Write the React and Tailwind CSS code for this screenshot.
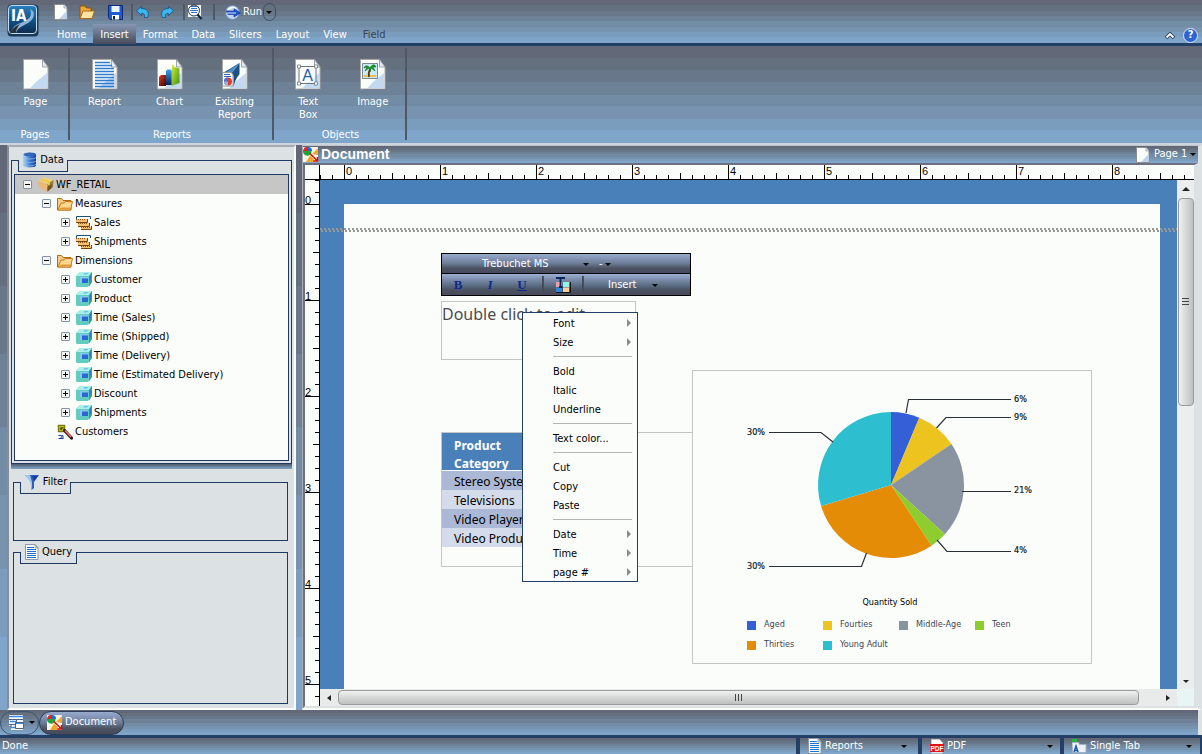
import React, { useState } from 'react';

// Banded gradients shared by the chrome
const BAND = 'bg-[linear-gradient(#626877_0_12%,#65707f_12%_25%,#68778a_25%_37%,#6e8297_37%_50%,#738ca6_50%_62%,#7793b0_62%_75%,#7a9dbd_75%_87%,#7fa5cb_87%)]';
const PILL = 'bg-[linear-gradient(#97abce,#8393b4_25%,#6a7c95_50%,#4c5262_75%,#454b59)]';

const tabs = ['Home', 'Insert', 'Format', 'Data', 'Slicers', 'Layout', 'View', 'Field'];

const tree = [
  { id: 'root', label: 'WF_RETAIL', icon: 'box', level: 0, open: true },
  { id: 'measures', label: 'Measures', icon: 'folder', level: 1, open: true },
  { id: 'sales', label: 'Sales', icon: 'measure', level: 2 },
  { id: 'shipments', label: 'Shipments', icon: 'measure', level: 2 },
  { id: 'dimensions', label: 'Dimensions', icon: 'folder', level: 1, open: true },
  { id: 'customer', label: 'Customer', icon: 'cube', level: 2 },
  { id: 'product', label: 'Product', icon: 'cube', level: 2 },
  { id: 'time-sales', label: 'Time (Sales)', icon: 'cube', level: 2 },
  { id: 'time-shipped', label: 'Time (Shipped)', icon: 'cube', level: 2 },
  { id: 'time-delivery', label: 'Time (Delivery)', icon: 'cube', level: 2 },
  { id: 'time-est', label: 'Time (Estimated Delivery)', icon: 'cube', level: 2 },
  { id: 'discount', label: 'Discount', icon: 'cube', level: 2 },
  { id: 'dim-shipments', label: 'Shipments', icon: 'cube', level: 2 },
  { id: 'customers', label: 'Customers', icon: 'filter', level: 1, leaf: true },
];

const indents = ['pl-2', 'pl-[27px]', 'pl-[46px]'];

const menuGroups = [
  [{ label: 'Font', sub: true }, { label: 'Size', sub: true }],
  [{ label: 'Bold' }, { label: 'Italic' }, { label: 'Underline' }],
  [{ label: 'Text color...' }],
  [{ label: 'Cut' }, { label: 'Copy' }, { label: 'Paste' }],
  [{ label: 'Date', sub: true }, { label: 'Time', sub: true }, { label: 'page #', sub: true }],
];

const slices = [
  { name: 'Aged', from: 0, to: 22.8, color: '#345fd6' },
  { name: 'Fourties', from: 22.8, to: 55.9, color: '#ecc31f' },
  { name: 'Middle-Age', from: 55.9, to: 132.4, color: '#8a94a1' },
  { name: 'Teen', from: 132.4, to: 146.2, color: '#8dce2e' },
  { name: 'Thirties', from: 146.2, to: 253.2, color: '#e58c06' },
  { name: 'Young Adult', from: 253.2, to: 360, color: '#2dbfcf' },
];

const leaders = [
  { text: '6%', x: 322, y: 32, d: 'M214 43L216.500 29.500H319' },
  { text: '9%', x: 322, y: 50, d: 'M244.500 58L254 47.500H319' },
  { text: '21%', x: 322, y: 123, d: 'M270 121.500H319' },
  { text: '4%', x: 322, y: 183, d: 'M245 170L255 181.500H319' },
  { text: '30%', x: 55, y: 199, d: 'M174.500 183L169.500 196.500H77' },
  { text: '30%', x: 55, y: 65, d: 'M141 72L129 62.500H77' },
];

const legend = [
  { name: 'Aged', square: 'bg-[#345fd6]' },
  { name: 'Fourties', square: 'bg-[#ecc31f]' },
  { name: 'Middle-Age', square: 'bg-[#8a94a1]' },
  { name: 'Teen', square: 'bg-[#8dce2e]' },
  { name: 'Thirties', square: 'bg-[#e58c06]' },
  { name: 'Young Adult', square: 'bg-[#2dbfcf]' },
];

const slicePath = (from, to) => {
  const point = (deg) => {
    const a = (deg * Math.PI) / 180;
    return `${199 + 73 * Math.sin(a)} ${115 - 73 * Math.cos(a)}`;
  };
  return `M199 115L${point(from)}A73 73 0 ${to - from > 180 ? 1 : 0} 1 ${point(to)}Z`;
};

/* ---------- icons ---------- */

const Sheet = ({ className, children }) => (
  <svg viewBox="0 0 26 31" className={className} aria-hidden="true">
    <path d="M3 3h17l5 6v22H3z" fill="#000" opacity=".25" />
    <path d="M.5.500h19L25 8v22H.5z" fill="#fbfdfb" stroke="#a9a6a6" />
    <path d="M24 14L13 23 7 29.500h17z" fill="#b5d0ee" opacity=".8" />
    <path d="M19.500.500V8H25z" fill="#e4ebf5" stroke="#8b8f98" strokeWidth=".8" />
    {children}
  </svg>
);

const BlueLines = () => (
  <path d="M3 3.500h15M3 6.500h17M3 9.500h19M3 12.500h19M3 15.500h19M3 18.500h19M3 21.500h19M3 24.500h19M3 27.500h19" stroke="#2e7bd0" strokeWidth="1.4" />
);

const PageIcon = () => <Sheet className="h-[31px] w-[26px]" />;

const ReportIcon = () => (
  <Sheet className="h-[31px] w-[26px]"><BlueLines /></Sheet>
);

const ChartIcon = () => (
  <Sheet className="h-[31px] w-[26px]">
    <defs>
      <linearGradient id="red" y2="1" x2="1"><stop stopColor="#e63b1c" /><stop offset="1" stopColor="#350505" /></linearGradient>
      <linearGradient id="blue" y2="1" x2="0"><stop stopColor="#35a5ee" /><stop offset="1" stopColor="#06225c" /></linearGradient>
      <linearGradient id="green" y2="1" x2="1"><stop stopColor="#d7ef3e" /><stop offset="1" stopColor="#3d9114" /></linearGradient>
    </defs>
    <path d="M2 18l2-2h5v11H2z" fill="url(#red)" />
    <path d="M9 12l1.500-1.500h3L15 12v14H9z" fill="url(#blue)" />
    <path d="M14.500 12l1-7 2 3 5 1.500V24l-8 3z" fill="url(#green)" />
  </Sheet>
);

const ExistingIcon = () => (
  <Sheet className="h-[31px] w-[26px]">
    <path d="M17.500 4L0 14.500h9l2.500 2.500v11c1.500-7 4-10 6-13z" fill="#1f4f80" />
    <path d="M17.500 4L3 14h7c3-3 5-6 7.500-10z" fill="#4f8fc4" />
    <path d="M.5 13.500H9l2 2V27H.5z" fill="#fff" stroke="#8b98a8" />
    <path d="M2 15.500h6M2 17.500h7" stroke="#2e6cc0" />
    <circle cx="6" cy="22.500" r="4" fill="#e53c28" />
    <path d="M6 22.500V18.500A4 4 0 002 22.500z" fill="#2d7be0" />
    <path d="M6 22.500H2A4 4 0 006 26.500z" fill="#8ab8ee" />
  </Sheet>
);

const TextBoxIcon = () => (
  <Sheet className="h-[31px] w-[26px]">
    <path d="M4 7.500h17v17H4z" fill="#fbfdfb" fillOpacity=".7" stroke="#6d7480" />
    <path d="M2.500 6h3v3h-3zM19.500 6h3v3h-3zM2.500 23h3v3h-3zM19.500 23h3v3h-3z" fill="#fff" stroke="#6d7480" strokeWidth=".8" />
    <text x="12.500" y="22" textAnchor="middle" fontSize="16" fill="#1c5fae" fontFamily="Liberation Sans, sans-serif">A</text>
  </Sheet>
);

const ImageIcon = () => (
  <Sheet className="h-[31px] w-[26px]">
    <path d="M2.500 4.500h15v15h-15z" fill="#c9eaf8" stroke="#7e8792" />
    <path d="M4 16h12v2H4z" fill="#e9bf58" />
    <path d="M10 10c-1 2-2 4-1 8" stroke="#5d3310" strokeWidth="1.800" fill="none" />
    <path d="M10 9C8 6 5 6 4 9l3-1-2 4 4-3 1 4 1-4 4 3-2-4 3 0c-1-3-4-3-6 1z" fill="#12a022" stroke="#0a5a16" strokeWidth=".5" />
  </Sheet>
);

const MiniPage = () => (
  <svg viewBox="0 0 14 16" className="h-4 w-3.5 shrink-0" aria-hidden="true">
    <path d="M.5.500h9.500l3 3.500v11.500H.5z" fill="#fbfdfb" stroke="#8f8d90" />
    <path d="M12.500 7L5 15h7.500z" fill="#bcd4ee" />
    <path d="M10 .500V4h3" fill="#e4ebf5" stroke="#8b8f98" strokeWidth=".7" />
  </svg>
);

const MiniReport = () => (
  <svg viewBox="0 0 14 16" className="h-4 w-3.5 shrink-0" aria-hidden="true">
    <path d="M.5.500h9.500l3 3v12H.5z" fill="#fbfdfb" stroke="#8f98a6" />
    <path d="M2 3.500h7M2 5.500h9M2 7.500h9M2 9.500h9M2 11.500h9M2 13.500h9" stroke="#1f6fd0" strokeWidth="1.200" />
    <path d="M10 .500V4h3z" fill="#cdd5e0" stroke="#8b8f98" strokeWidth=".7" />
  </svg>
);

const FolderIcon = () => (
  <svg viewBox="0 0 16 14" className="h-3.5 w-4" aria-hidden="true">
    <path d="M.5 13V1.500h4l1.500 2h8V13z" fill="#f6cf8c" stroke="#b36a12" />
    <path d="M1 13L4 6h3l1-1.500h7.500L13.500 13z" fill="#fcd78d" stroke="#c57a18" />
    <path d="M2 12.500l2-2h9.500l-.5 2z" fill="#e39a34" />
  </svg>
);

const MeasureIcon = () => (
  <svg viewBox="0 0 16 14" className="h-3.5 w-4" aria-hidden="true">
    <path d="M.5 3V.500h14V3" fill="none" stroke="#1c4f7c" />
    <path d="M0 3h11v3H0zM2 7h11v3H2zM5 11h10v2H5z" fill="#f4c076" />
    <path d="M0 6.500h11.500V3M2 10.500h11.500V7M5 13.500h10.500V10" fill="none" stroke="#7a430c" />
    <path d="M0 3.500h10M2 7.500h10M5 11.500h9" stroke="#8d5518" strokeDasharray="1 1" />
  </svg>
);

const CubeIcon = () => (
  <svg viewBox="0 0 16 15" className="h-[15px] w-4" aria-hidden="true">
    <path d="M0 4L4 0h12v10l-4 5H1l-1-1z" fill="#62cdbf" />
    <path d="M0 4L4 0h12l-3 4z" fill="#a9f0e8" />
    <path d="M13 4l3-4v10l-3 4.500z" fill="#3a9f8e" />
    <path d="M4 5h8v6H4z" fill="#2a68d0" />
    <path d="M4 5h8v1.500H6V11H4z" fill="#86c8f2" />
    <path d="M13.500 5L15 3v4.500L13.500 10z" fill="#2f78d8" />
    <path d="M7 2.500L8.500 1h4L11 2.500z" fill="#6fc0ee" />
  </svg>
);

const BoxIcon = () => (
  <svg viewBox="0 0 16 15" className="h-[15px] w-4" aria-hidden="true">
    <path d="M0 4L6.500.500 15 3l-5.500 4z" fill="#f0d27a" />
    <path d="M0 4l9.500 3v8L1 10z" fill="#ecb878" />
    <path d="M9.500 7L15.500 3l-.500 7-5.500 5z" fill="#94793a" />
    <path d="M4 2l8 2.500v3l-2 1v-3L2.500 3z" fill="#e8c93a" />
    <path d="M9.500 10l4-3v4l-4 3z" fill="#6b5626" />
  </svg>
);

const CustomersIcon = () => (
  <svg viewBox="0 0 16 16" className="h-4 w-4" aria-hidden="true">
    <path d="M1.500 1.500h6v6h-6z" fill="#d9d613" stroke="#7d7b0c" strokeWidth="1.500" />
    <path d="M4 6V4h2.500" fill="none" stroke="#111" strokeWidth="1.200" />
    <path d="M1.500 11.500h3M6 11l-3 4M1.500 14.500h5M4.500 11l2 2-2 2" stroke="#173f9c" fill="none" />
    <path d="M7.500 6.500l7 7.500" stroke="#2d1512" strokeWidth="3.200" strokeLinecap="round" />
    <path d="M8 6.500l6 6.500" stroke="#e0706a" strokeWidth="1.800" />
  </svg>
);

const DatabaseIcon = () => (
  <svg viewBox="0 0 15 16" className="h-4 w-[15px]" aria-hidden="true">
    <defs>
      <linearGradient id="db"><stop stopColor="#bcdcf8" /><stop offset=".5" stopColor="#3b83d8" /><stop offset="1" stopColor="#173a9a" /></linearGradient>
    </defs>
    <path d="M1 2.500C1-.2 14-.2 14 2.500v11c0 2.500-13 2.500-13 0z" fill="url(#db)" />
    <path d="M1 5.500c2 2 11 2 13 0M1 9c2 2 11 2 13 0M1 12.300c2 2 11 2 13 0" stroke="#8db9ea" strokeWidth=".8" fill="none" />
    <ellipse cx="7.500" cy="2.500" rx="6" ry="1.700" fill="#3166b8" />
  </svg>
);

const FunnelIcon = () => (
  <svg viewBox="0 0 16 16" className="h-4 w-4" aria-hidden="true">
    <path d="M1 1h14l-5 7v6l-2.500 2V8z" fill="#2a5fc0" />
    <path d="M1 1h5l2 7v7L6 8z" fill="#9cc8ee" />
    <path d="M8 2h6l-4 5z" fill="#1240a0" />
  </svg>
);

const DocIcon = () => (
  <svg viewBox="0 0 16 15" className="h-[15px] w-4 shrink-0" aria-hidden="true">
    <path d="M0 0h15v15H0z" fill="#fbf6e6" />
    <path d="M9 7l6-6v7zM3 15l4.500-7 5 7z" fill="#f0a52c" />
    <path d="M0 4h8.500A4 4 0 010 5z" fill="#1fa53c" />
    <path d="M4 4l1-4a4 4 0 014 4z" fill="#1c6be0" />
    <path d="M0 4a4.200 4.200 0 015-4v4z" fill="#e02818" />
    <path d="M7 6.500l7 7M14.500 10v4h-4" stroke="#c81616" strokeWidth="1.500" fill="none" />
  </svg>
);

const WindowsIcon = () => (
  <svg viewBox="0 0 16 16" className="h-4 w-4 shrink-0" aria-hidden="true">
    <path d="M0 0h14v15H2V11H0z" fill="#f4f7fb" />
    <path d="M0 1.500h14M1 6.500h6M2 12.500h5" stroke="#3d8ae0" strokeWidth="1.500" />
    <path d="M0 4.500h14M7.500 5v3M0 9.500h6M2 10v2" stroke="#54637a" />
    <path d="M6.500 7.500h8v6h-8z" fill="#fff" stroke="#54637a" />
    <path d="M7 8.500h7" stroke="#3d8ae0" />
  </svg>
);

const PdfIcon = () => (
  <svg viewBox="0 0 14 15" className="h-[15px] w-3.5 shrink-0" aria-hidden="true">
    <path d="M1.500.500h8l3 3V14h-11z" fill="#fff" stroke="#c8c8c8" />
    <path d="M0 5h14v8H0z" fill="#e01414" />
    <text x="7" y="11.500" textAnchor="middle" fontSize="6.500" fontWeight="bold" fill="#fff" fontFamily="Liberation Sans, sans-serif">PDF</text>
  </svg>
);

const TabIcon = () => (
  <svg viewBox="0 0 15 14" className="h-3.5 w-[15px] shrink-0" aria-hidden="true">
    <path d="M0 0h5v3H0z" fill="#2bb53e" />
    <path d="M0 3.500h6.500l1 2H14v8H.5z" fill="#eef2f8" stroke="#a4b1c4" />
    <path d="M2 13l2-6 2 6M2.500 11.500h3.500" stroke="#1c56b0" strokeWidth="1.500" fill="none" />
  </svg>
);

const LogoIcon = () => (
  <svg viewBox="0 0 32 33" className="h-[33px] w-8" aria-hidden="true">
    <defs>
      <linearGradient id="logo" x2="0" y2="1"><stop stopColor="#2a7fc0" /><stop offset=".5" stopColor="#10548c" /><stop offset="1" stopColor="#0d2c4a" /></linearGradient>
    </defs>
    <rect x=".5" y=".5" width="31" height="32" rx="4" fill="#1b3a58" />
    <rect x="1.500" y="1.500" width="28" height="28" rx="3.500" fill="url(#logo)" stroke="#c3dcf0" />
    <path d="M3 29c4-9 9-9 15-12s7-7 5-12l3 2c2 5 0 9-5 12s-10 4-12 10z" fill="#8fb6d6" />
    <path d="M3 29c2-5 6-7 10-9-2 3-4 5-4 9z" fill="#2a3138" />
    <text x="4" y="17" fontSize="15" fontWeight="bold" fill="#fff" fontFamily="DejaVu Sans Condensed, sans-serif">IA</text>
  </svg>
);

const SmallFolderOpen = () => (
  <svg viewBox="0 0 16 15" className="h-[15px] w-4" aria-hidden="true">
    <path d="M1 13V1h5l1.500 2H12v3" fill="#f0a838" stroke="#8a5314" />
    <path d="M1 13.500L4 6h11.500L13 13.500z" fill="#fde3a0" stroke="#a86a1c" />
  </svg>
);

const SaveIcon = () => (
  <svg viewBox="0 0 15 15" className="h-[15px] w-[15px]" aria-hidden="true">
    <path d="M.5.500h14v14H2l-1.500-2z" fill="#1c5ccc" stroke="#0d2a78" />
    <path d="M3.500 1h8v6h-8z" fill="#e8f3fc" />
    <path d="M4 10h7v4.500H4z" fill="#fff" />
    <path d="M5 11h2v3.500H5z" fill="#0d1f52" />
  </svg>
);

const UndoIcon = ({ className }) => (
  <svg viewBox="0 0 14 13" className={className} aria-hidden="true">
    <path d="M0 5L5.500.500V3C11 2.500 14.500 6 12 12.500H8.500C9.500 9.500 8.500 8 5.500 8v2.500z" fill="#3cb8ee" stroke="#0d4c84" strokeWidth=".8" />
  </svg>
);

const PreviewIcon = () => (
  <svg viewBox="0 0 16 16" className="h-4 w-4" aria-hidden="true">
    <path d="M1 1h13v12H1z" fill="#eef3f8" />
    <circle cx="7" cy="6.500" r="5.500" fill="#fff" stroke="#26354a" />
    <path d="M4 4.500h6M3 6.500h8M4 8.500h6M4 2.500h6" stroke="#2e74c8" />
    <path d="M10.500 10.500l4 4.500" stroke="#142640" strokeWidth="2.200" />
  </svg>
);

const RunIcon = () => (
  <svg viewBox="0 0 16 15" className="h-[15px] w-4" aria-hidden="true">
    <circle cx="7.500" cy="7.500" r="7" fill="#c4d6f2" stroke="#6688c0" />
    <path d="M1 6h8V3.500L15.500 8 9 12V9.500H3z" fill="#1f55c8" stroke="#0b2f8e" strokeWidth=".6" />
    <path d="M2 8h9" stroke="#dbe7fa" />
    <path d="M3 4.500C5 2 9 2 11 3.500" stroke="#fff" strokeWidth="1.300" fill="none" />
  </svg>
);

const TextColorIcon = () => (
  <svg viewBox="0 0 16 16" className="h-4 w-4" aria-hidden="true">
    <path d="M1 5h6v5H1z" fill="#f0a0a0" />
    <path d="M8 5h6v5H8z" fill="#92f5e2" />
    <path d="M1 10.500h6V15H1z" fill="#2b85d8" />
    <path d="M8 10.500h6V15H8z" fill="#f8d29a" />
    <path d="M1 15.500h14.500V5" fill="none" stroke="#111" />
    <path d="M1 1h9M5.500 1v9M4 10h3.500" stroke="#07285e" strokeWidth="1.800" />
  </svg>
);

const treeIcons = {
  box: <BoxIcon />,
  folder: <FolderIcon />,
  measure: <MeasureIcon />,
  cube: <CubeIcon />,
  filter: <CustomersIcon />,
};

const ribbon = [
  { title: 'Pages', width: 'w-[70px]', pad: 'pl-[3px]', items: [{ label: 'Page', icon: <PageIcon /> }] },
  {
    title: 'Reports',
    width: 'w-[204px]',
    pad: 'pl-[2px]',
    items: [
      { label: 'Report', icon: <ReportIcon /> },
      { label: 'Chart', icon: <ChartIcon /> },
      { label: 'Existing Report', icon: <ExistingIcon /> },
    ],
  },
  {
    title: 'Objects',
    width: 'w-[133px]',
    pad: 'pl-[2px]',
    items: [
      { label: 'Text Box', icon: <TextBoxIcon />, labelWidth: 'w-8' },
      { label: 'Image', icon: <ImageIcon /> },
    ],
  },
];

const Caret = ({ className = 'border-t-black' }) => (
  <span className={`pointer-events-none h-0 w-0 shrink-0 border-x-[3px] border-t-[3px] border-x-transparent ${className}`} />
);

/* ---------- header ---------- */

const Divider = () => <span className="h-4 w-0.5 bg-[#505866]" />;

const QuickAccess = () => (
  <div className="flex h-6 items-center">
    <button aria-label="New" className="ml-2 flex w-5 justify-center"><MiniPage /></button>
    <button aria-label="Open" className="ml-1.5 flex w-5 justify-center"><SmallFolderOpen /></button>
    <button aria-label="Save" className="ml-2 mr-1.5 flex w-5 justify-center"><SaveIcon /></button>
    <Divider />
    <button aria-label="Undo" className="flex w-5 justify-center"><UndoIcon className="h-3 w-3.5" /></button>
    <button aria-label="Redo" className="ml-1 mr-1.5 flex w-5 justify-center"><UndoIcon className="h-3 w-3.5 -scale-x-100" /></button>
    <Divider />
    <button aria-label="Preview" className="mr-2 flex w-5 justify-center"><PreviewIcon /></button>
    <Divider />
    <button className="ml-2.5 flex items-center gap-0.5"><RunIcon />Run</button>
    <button aria-label="Run options" className="ml-px flex h-[18px] w-[13px] items-center justify-center rounded-full border border-[#3c4f68]"><Caret /></button>
  </div>
);

const Header = ({ activeTab, onTab }) => (
  <header className={`flex h-[46px] border-b-[3px] border-[#243f66] ${BAND}`}>
    <button aria-label="Application menu" className="ml-[7px] mt-1 h-[33px] w-8 shrink-0"><LogoIcon /></button>
    <div className="flex flex-1 flex-col justify-between">
      <div className="pl-1"><QuickAccess /></div>
      <div className="flex h-5 items-end justify-between">
        <nav className="flex h-5 items-center pl-[11px]">
          {tabs.map((tab) => (
            <button
              key={tab}
              onClick={() => onTab(tab)}
              className={`h-5 px-[7px] pt-0.5 ${tab === activeTab ? 'bg-[linear-gradient(#8897b6,#6f7d94_35%,#454b59)]' : ''} ${tab === 'Field' ? 'ml-0.5 text-[#3c4450]' : ''}`}
            >
              {tab}
            </button>
          ))}
        </nav>
        <div className="flex items-center gap-2 pb-px pr-1">
          <button aria-label="Collapse ribbon">
            <svg viewBox="0 0 10 7" className="h-[7px] w-2.5"><path d="M1 6l4-4 4 4" fill="none" stroke="#2c3e55" strokeWidth="3.500" /><path d="M1.500 5.500L5 2l3.500 3.500" fill="none" stroke="#fff" strokeWidth="1.800" /></svg>
          </button>
          <button aria-label="Help" className="flex size-[15px] items-center justify-center rounded-full border border-[#dfe8f4] bg-[#2f63d4] font-bold">?</button>
        </div>
      </div>
    </div>
  </header>
);

const Ribbon = () => (
  <div className={`flex h-[97px] pt-0.5 ${BAND}`}>
    {ribbon.map((group) => (
      <section key={group.title} className={`mb-[3px] flex flex-col justify-between border-r-2 border-[#505866] ${group.width}`}>
        <div className={`flex ${group.pad}`}>
          {group.items.map((item) => (
            <button key={item.label} className="flex w-[65px] flex-col items-center gap-[5px] pt-[11px] leading-[13px]">
              {item.icon}
              <span className={`text-center ${item.labelWidth || 'max-w-[42px]'}`}>{item.label}</span>
            </button>
          ))}
        </div>
        <h2 className="pl-0.5 text-center leading-[10px]">{group.title}</h2>
      </section>
    ))}
  </div>
);

/* ---------- left panel ---------- */

const LegendBox = ({ label, icon, tabWidth, className, children }) => (
  <section className={`flex flex-col ${className}`}>
    <div className="flex h-3">
      <span className="w-[7px] border-l border-t border-[#1f3864]" />
      <h2 className={`flex items-end justify-center border-x border-b border-[#1f3864] ${tabWidth}`}>
        <span className="mb-[3px] flex items-center gap-[3px]">{icon}{label}</span>
      </h2>
      <span className="flex-1 border-r border-t border-[#1f3864]" />
    </div>
    <div className="flex flex-1 flex-col border-x border-b border-[#1f3864]">{children}</div>
  </section>
);

const TreeRow = ({ node, selected, onSelect }) => (
  <li className={`flex h-[19px] items-center ${indents[node.level]} ${selected ? 'bg-[#c6c6c6]' : ''}`}>
    {node.leaf ? (
      <span className="w-[15px]" />
    ) : (
      <button aria-label={node.open ? 'Collapse' : 'Expand'} className="mr-1.5 flex size-[9px] items-center justify-center rounded-[1px] border border-[#8494a8] bg-[#f4f6f4]">
        <svg viewBox="0 0 5 5" className="size-[5px]"><path d={node.open ? 'M0 2.500h5' : 'M0 2.500h5M2.500 0v5'} stroke="#000" /></svg>
      </button>
    )}
    <button onClick={() => onSelect(node.id)} className="flex items-center gap-0.5 text-black">
      {treeIcons[node.icon]}
      <span className="pt-0.5">{node.label}</span>
    </button>
  </li>
);

const DataPanel = () => {
  const [selected, setSelected] = useState('root');
  return (
    <aside className="flex w-[289px] shrink-0 flex-col border-2 border-b-[#fbfdfb] border-l-[#888c98] border-r-[#fbfdfb] border-t-[#a8acb0] bg-[#dce1e3] text-black">
      <LegendBox label="Data" icon={<DatabaseIcon />} tabWidth="w-[50px]" className="mx-0.5 mt-[13px]">
        <ul className="mx-0.5 mb-0.5 mt-0.5 h-[287px] border border-[#1f3864] bg-[#fbfdfb]">
          {tree.map((node) => (
            <TreeRow key={node.id} node={node} selected={node.id === selected} onSelect={setSelected} />
          ))}
        </ul>
      </LegendBox>
      <div className="mx-0.5 h-[5px] bg-[linear-gradient(#4f5a6d,#7fa5cb)]" />
      <LegendBox label="Filter" icon={<FunnelIcon />} tabWidth="w-[51px]" className="ml-1 mr-1.5 mt-[13px] h-[59px]" />
      <LegendBox label="Query" icon={<MiniReport />} tabWidth="w-[57px]" className="mb-1 ml-1 mr-1.5 mt-[11px] flex-1" />
    </aside>
  );
};

/* ---------- document ---------- */

const eighths = [0, 1, 2, 3, 4, 5, 6, 7];

const TopRuler = () => (
  <div className="flex h-3.5 min-w-0 flex-1 items-end overflow-hidden border-l border-black font-['Liberation_Sans',sans-serif] text-[11px] leading-[13px]">
    <span className="h-1 w-3 shrink-0 border-l border-black" />
    <span className="h-1 w-3 shrink-0 border-l border-black" />
    {[0, 1, 2, 3, 4, 5, 6, 7, 8].map((inch) => (
      <div key={inch} className="flex h-full w-24 shrink-0 items-end">
        {eighths.map((n) => (
          <span key={n} className={`w-3 border-l border-black ${n === 0 ? 'h-full pl-px' : n === 4 ? 'h-1.5' : 'h-1'}`}>{n === 0 && inch}</span>
        ))}
      </div>
    ))}
  </div>
);

const NumberTick = ({ children }) => (
  <span className="flex h-3 w-full shrink-0 items-start justify-between">
    <span className="pt-[3px]">{children}</span>
    <span className="w-1 border-t border-black" />
  </span>
);

const LeftRuler = () => (
  <div className="flex w-[15px] shrink-0 flex-col items-end overflow-hidden border-r border-black bg-[#fbfdfb] font-['Liberation_Sans',sans-serif] text-[11px] leading-[10px]">
    <span className="h-3 w-1 shrink-0 border-t border-black" />
    <NumberTick>0</NumberTick>
    {[1, 2, 3, 4, 5, 6].map((inch) => (
      <div key={inch} className="flex h-24 w-full shrink-0 flex-col items-end">
        <span className="h-3 w-full border-t border-black" />
        {[1, 2, 3, 4, 5, 6].map((n) => (
          <span key={n} className={`h-3 border-t border-black ${n === 4 ? 'w-1.5' : 'w-1'}`} />
        ))}
        <NumberTick>{inch < 6 && inch}</NumberTick>
      </div>
    ))}
  </div>
);

const SelectBox = ({ label, options, className, caretClass }) => (
  <label className={`flex items-center ${className}`}>
    <select aria-label={label} className="min-w-0 flex-1 cursor-pointer appearance-none bg-transparent outline-none">
      {options.map((o) => <option key={o}>{o}</option>)}
    </select>
    <Caret className={caretClass} />
  </label>
);

const FloatingToolbar = () => (
  <div className="absolute left-[121px] top-[73px] flex h-[43px] w-[250px] flex-col border border-black font-['DejaVu_Sans_Condensed',sans-serif] text-[11px] text-white">
    <div className={`flex h-[19px] items-center pt-0.5 ${PILL}`}>
      <SelectBox label="Font family" options={['Trebuchet MS']} className="ml-10 w-[107px]" />
      <SelectBox label="Font size" options={['-']} className="ml-2.5 w-3" />
    </div>
    <div className="flex flex-1 items-center border-t border-black bg-[linear-gradient(#9db0d3,#7d8eac_25%,#5f7289_50%,#4c5262_75%,#454b59)] font-['Liberation_Serif',serif] text-[13px] font-bold text-[#0b2a8c]">
      <button aria-label="Bold" className="w-8">B</button>
      <button aria-label="Italic" className="w-8 italic">I</button>
      <button aria-label="Underline" className="w-8 underline">U</button>
      <span className="ml-1 h-[17px] w-0.5 bg-[#454b59]" />
      <button aria-label="Text color" className="mx-2.5 flex w-[18px] justify-center"><TextColorIcon /></button>
      <span className="h-[17px] w-0.5 bg-[#454b59]" />
      <button className="ml-6 flex items-center gap-4 pt-0.5 font-['DejaVu_Sans_Condensed',sans-serif] text-[11px] font-normal text-white">Insert <Caret /></button>
    </div>
  </div>
);

const ContextMenu = () => (
  <div role="menu" className="absolute left-[202px] top-[132px] w-[116px] border border-[#243f66] bg-[#fbfdfb] text-black">
    {menuGroups.map((group, i) => (
      <div key={group[0].label}>
        {i > 0 && <div className="ml-[30px] mr-[5px] flex h-2.5 items-center"><hr className="w-full border-[#b4b6b6]" /></div>}
        {group.map((item) => (
          <button key={item.label} role="menuitem" className="flex h-[19px] w-full items-center justify-between pl-[30px] pr-1.5 text-left">
            <span className="pt-[3px]">{item.label}</span>
            {item.sub && <span className="h-0 w-0 border-y-4 border-l-4 border-y-transparent border-l-[#8a8a90]" />}
          </button>
        ))}
      </div>
    ))}
  </div>
);

const ReportTable = () => (
  <div className="absolute left-[121px] top-[252px] h-[135px] w-[252px] border border-[#c4c6c6] font-['Noto_Sans',sans-serif] text-[12px]">
    <table className="w-[160px] border-collapse text-left text-black">
      <thead>
        <tr className="border-b border-white bg-[#4a80ba] text-white">
          <th className="p-0 pl-3 align-top"><div className="h-[37px] w-20 pt-1 leading-[18px]">Product Category</div></th>
        </tr>
      </thead>
      <tbody>
        {['Stereo Systems', 'Televisions', 'Video Players', 'Video Production'].map((name, i) => (
          <tr key={name} className={i % 2 ? 'bg-[#d4dcec]' : 'bg-[#abb9d6]'}>
            <td className="p-0 pl-3 pt-0.5 leading-[17px]">{name}</td>
          </tr>
        ))}
      </tbody>
    </table>
  </div>
);

const PieChart = () => (
  <figure className="absolute left-[372px] top-[190px] h-[294px] w-[400px] border border-[#c4c6c6] bg-[#fbfdfb] text-[9px] text-[#3c4654]">
    <svg viewBox="1 1 398 225" className="h-[225px] w-[398px]" role="img" aria-label="Quantity sold by age group">
      {slices.map((s) => <path key={s.name} d={slicePath(s.from, s.to)} fill={s.color} />)}
      {leaders.map((l) => (
        <g key={l.d}>
          <path d={l.d} fill="none" stroke="#2a3038" strokeWidth="1.200" />
          <text x={l.x} y={l.y} fill="#111820" stroke="#111820" strokeWidth=".2" fontSize="9">{l.text}</text>
        </g>
      ))}
    </svg>
    <figcaption className="h-4 pr-1 text-center text-black">Quantity Sold</figcaption>
    <ul className="ml-[54px] mt-[7px] grid grid-cols-[repeat(4,76px)] gap-y-2">
      {legend.map((item) => (
        <li key={item.name} className="flex h-3 items-center gap-2 whitespace-nowrap">
          <span className={`size-[9px] ${item.square}`} />
          {item.name}
        </li>
      ))}
    </ul>
  </figure>
);

const Canvas = () => (
  <div className="relative min-w-0 flex-1 overflow-hidden bg-[#4a80ba]">
    <div className="absolute bottom-0 left-6 right-[17px] top-6 bg-[#fbfdfb]" />
    <div className="absolute inset-x-0 top-12 flex flex-col">
      <span className="h-0.5 bg-[repeating-linear-gradient(90deg,#969896_0_2px,transparent_2px_4px)]" />
      <span className="h-0.5 bg-[repeating-linear-gradient(90deg,transparent_0_1px,#969896_1px_3px,transparent_3px_4px)]" />
    </div>
    <FloatingToolbar />
    <textarea
      aria-label="Text box"
      defaultValue="Double click to edit"
      className="absolute left-[121px] top-[121px] h-[59px] w-[195px] resize-none border border-[#c4c6c6] bg-transparent font-['Noto_Sans',sans-serif] text-[16px] leading-6 text-[#4c4c4c] outline-none"
    />
    <ReportTable />
    <PieChart />
    <ContextMenu />
  </div>
);

const DocumentPanel = () => (
  <main className="flex min-w-0 flex-1 flex-col border-b-2 border-l border-r-4 border-t border-b-[#fbfdfb] border-l-[#a8acb0] border-r-[#dce1e3] border-t-[#c0c4c8] text-white">
    <div className={`flex h-[17px] items-center justify-between ${BAND}`}>
      <h1 className="flex items-center gap-0.5 font-['Liberation_Sans',sans-serif] text-[14px] font-bold"><DocIcon />Document</h1>
      <div className="flex items-center gap-1 pr-0.5"><MiniPage /><SelectBox label="Page" options={['Page 1']} className="w-[42px]" /></div>
    </div>
    <div className="flex min-h-0 flex-1 flex-col border-2 border-r-4 border-b-[#dce1e3] border-l-[#6c7080] border-r-[#dce1e3] border-t-[#6c7080] bg-[#fbfdfb] text-black">
      <div className="flex border-b border-black pl-3.5">
        <TopRuler />
      </div>
      <div className="flex min-h-0 flex-1">
        <LeftRuler />
        <div className="flex min-w-0 flex-1 flex-col">
          <div className="flex min-h-0 flex-1">
            <Canvas />
            <div className="flex w-[17px] flex-col items-center bg-[#ebeeec] text-black">
              <button aria-label="Scroll up" className="flex h-[18px] items-center"><span className="border-x-4 border-b-4 border-x-transparent border-b-[#222]" /></button>
              <div className="flex h-[208px] w-4 flex-col items-center justify-center gap-px rounded-sm border border-[#9a9c9c] bg-[linear-gradient(90deg,#f0f2f2,#d6d8d8_50%,#bfc1c1)]">
                {[0, 1, 2].map((n) => <span key={n} className="mb-px h-px w-[7px] bg-[#444]" />)}
              </div>
              <span className="flex-1" />
              <button aria-label="Scroll down" className="flex h-4 items-center"><Caret className="border-t-[#222]" /></button>
            </div>
          </div>
          <div className="flex h-[17px] items-center bg-[#e8ebe9]">
            <button aria-label="Scroll left" className="flex w-[18px] justify-center"><span className="border-y-[3px] border-r-4 border-y-transparent border-r-[#222]" /></button>
            <div className="flex h-[15px] flex-1 items-center justify-center gap-0.5 rounded-sm border border-[#9a9c9c] bg-[linear-gradient(#f0f2f2,#d6d8d8_50%,#bfc1c1)]">
              {[0, 1, 2].map((n) => <span key={n} className="h-[7px] w-px bg-[#444]" />)}
            </div>
            <button aria-label="Scroll right" className="ml-5 flex w-[18px] justify-center"><span className="border-y-[3px] border-l-4 border-y-transparent border-l-[#222]" /></button>
            <span className="w-[17px] self-stretch bg-[#e9f5f4]" />
          </div>
        </div>
      </div>
    </div>
  </main>
);

/* ---------- footer ---------- */

const Footer = () => (
  <footer>
    <div className={`mr-1 flex h-[25px] items-center ${BAND}`}>
      <button aria-label="Windows" className="flex h-6 w-[39px] items-center justify-end gap-1 rounded-full border border-[#3c5472] pr-[3px]"><WindowsIcon /><Caret /></button>
      <button className={`flex h-6 items-center gap-0.5 rounded-full border border-[#2d3b52] px-[7px] ${PILL}`}><DocIcon />Document</button>
    </div>
    <div className="flex h-[19px] border-t-[3px] border-[#243f66] bg-[#243f66]">
      <p className={`flex flex-1 items-center pl-0.5 ${BAND}`}>Done</p>
      <div className={`mx-1 flex w-[118px] items-center gap-[3px] pl-2 ${BAND}`}><MiniReport /><SelectBox label="Reports" options={['Reports']} className="w-[82px]" /></div>
      <div className={`mr-1 flex w-[138px] items-center gap-[3px] pl-2 ${BAND}`}><PdfIcon /><SelectBox label="Output format" options={['PDF']} className="w-[106px]" /></div>
      <div className={`mr-0.5 flex w-[136px] items-center gap-[3px] pl-2 ${BAND}`}><TabIcon /><SelectBox label="Output target" options={['Single Tab']} className="w-[102px]" /></div>
    </div>
  </footer>
);

export default function App() {
  const [activeTab, setActiveTab] = useState('Insert');

  return (
    <div className="flex h-screen flex-col overflow-hidden bg-[#dce1e3] font-['DejaVu_Sans_Condensed','DejaVu_Sans',sans-serif] text-[11px] text-white">
      <Header activeTab={activeTab} onTab={setActiveTab} />
      <Ribbon />
      <div className="h-0.5 bg-[#ccd5dd]" />
      <div className={`flex min-h-0 flex-1 pl-[7px] ${BAND}`}>
        <DataPanel />
        <div className="w-1.5 shrink-0" />
        <DocumentPanel />
      </div>
      <Footer />
    </div>
  );
}
